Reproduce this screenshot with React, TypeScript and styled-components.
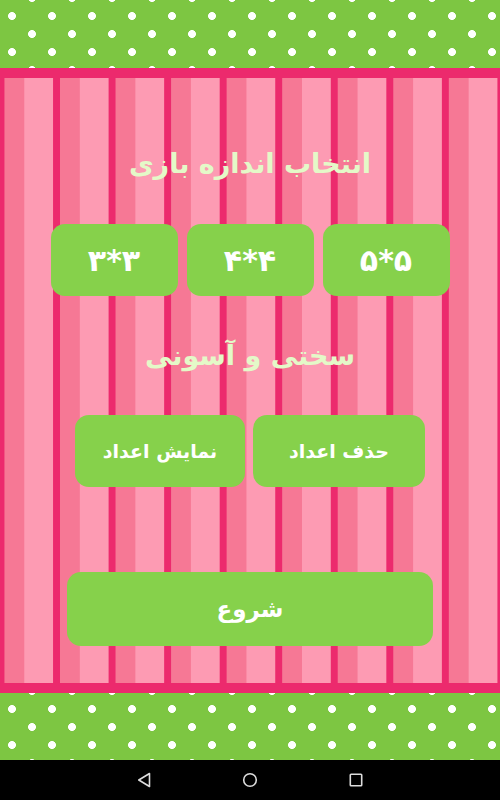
import React from "react";
import styled, { createGlobalStyle } from "styled-components";

const Global = createGlobalStyle`
  html, body { margin: 0; padding: 0; background: #000; }
  #root { width: 500px; height: 800px; }
`;

const Screen = styled.div`
  width: 500px;
  height: 800px;
  display: flex;
  flex-direction: column;
  font-family: "DejaVu Sans", "Noto Sans", sans-serif;
  overflow: hidden;
`;

const DotBand = styled.div<{ $h: number }>`
  height: ${(p) => p.$h}px;
  flex: none;
  background-color: #7dc642;
  background-image: radial-gradient(circle at center, #fff 0, #fff 3.6px, rgba(255,255,255,0) 4.3px),
    radial-gradient(circle at center, #fff 0, #fff 3.6px, rgba(255,255,255,0) 4.3px);
  background-size: 40px 36px;
  background-position: -8px -2px, 12px 16px;
`;

const Frame = styled.main`
  flex: 1;
  border-top: 10px solid #ec2a6d;
  border-bottom: 10px solid #ec2a6d;
  background-image: linear-gradient(
    to right,
    #ec2a6d 0,
    #ec2a6d 7px,
    #f67895 7px,
    #f67895 26.5px,
    #fd9bb3 26.5px,
    #fd9bb3 100%
  );
  background-size: 55.56px 100%;
  background-position: -2.5px 0;
  display: flex;
  flex-direction: column;
  align-items: center;
  padding-top: 66px;
  box-sizing: border-box;
  direction: rtl;
`;

const Heading = styled.h1<{ $mt?: number }>`
  margin: ${(p) => p.$mt ?? 0}px 0 0;
  height: 40px;
  line-height: 40px;
  font-size: 27px;
  font-weight: bold;
  color: #e4f9c8;
  text-align: center;
`;

const Row = styled.div<{ $mt: number; $gap: number }>`
  display: flex;
  gap: ${(p) => p.$gap}px;
  margin-top: ${(p) => p.$mt}px;
`;

const GreenButton = styled.button<{ $w: number; $h?: number; $fs: number }>`
  width: ${(p) => p.$w}px;
  height: ${(p) => p.$h ?? 72}px;
  border: none;
  border-radius: 14px;
  background: #86d14b;
  color: #fff;
  font-family: "DejaVu Sans", "Noto Sans", sans-serif;
  font-weight: bold;
  font-size: ${(p) => p.$fs}px;
  display: flex;
  align-items: center;
  justify-content: center;
  padding: 0;
  direction: rtl;
`;

const StartButton = styled(GreenButton)`
  margin-top: 85px;
`;

const NavBar = styled.nav`
  height: 40px;
  flex: none;
  background: #000;
  display: flex;
  align-items: center;
  justify-content: center;
  gap: 82px;
`;

const NavSlot = styled.div`
  width: 24px;
  height: 24px;
  display: flex;
  align-items: center;
  justify-content: center;
`;

export default function App() {
  return (
    <>
      <Global />
      <Screen>
        <DotBand $h={68} />
        <Frame>
          <Heading>انتخاب اندازه بازی</Heading>
          <Row $mt={40} $gap={9}>
            <GreenButton $w={127} $fs={30}>۵*۵</GreenButton>
            <GreenButton $w={127} $fs={30}>۴*۴</GreenButton>
            <GreenButton $w={127} $fs={30}>۳*۳</GreenButton>
          </Row>
          <Heading $mt={40}>سختی و آسونی</Heading>
          <Row $mt={39} $gap={8}>
            <GreenButton $w={172} $fs={19}>حذف اعداد</GreenButton>
            <GreenButton $w={170} $fs={19}>نمایش اعداد</GreenButton>
          </Row>
          <StartButton $w={366} $h={74} $fs={23}>شروع</StartButton>
        </Frame>
        <DotBand $h={67} />
        <NavBar>
          <NavSlot>
            <svg width="14" height="16" viewBox="0 0 14 16">
              <path d="M12.5 1.5 L1.8 8 L12.5 14.5 Z" fill="none" stroke="#ddd" strokeWidth="1.6" strokeLinejoin="round" />
            </svg>
          </NavSlot>
          <NavSlot>
            <svg width="16" height="16" viewBox="0 0 16 16">
              <circle cx="8" cy="8" r="6.3" fill="none" stroke="#ddd" strokeWidth="1.6" />
            </svg>
          </NavSlot>
          <NavSlot>
            <svg width="14" height="14" viewBox="0 0 14 14">
              <rect x="1.3" y="1.3" width="11.4" height="11.4" rx="0.8" fill="none" stroke="#ddd" strokeWidth="1.6" />
            </svg>
          </NavSlot>
        </NavBar>
      </Screen>
    </>
  );
}
